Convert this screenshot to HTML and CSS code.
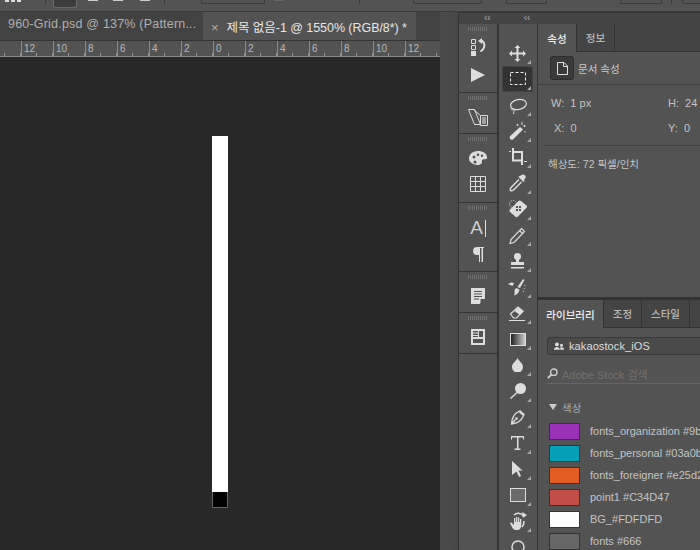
FILE: index.html
```html
<!DOCTYPE html>
<html lang="ko">

<head>
	<meta charset="UTF-8">
	<title>Photoshop</title>
	<link rel="stylesheet" href="styles.css">
</head>

<body>
	<div class="optionsBar">
		<span class="optDots"></span>
		<span class="optDiv optDiv1"></span>
		<span class="optSwatch"></span>
		<span class="optTick optTick1"></span>
		<span class="optTick"></span>
		<span class="optTick optTick3"></span>
		<span class="optDiv optDiv2"></span>
		<span class="optField optField1"></span>
		<span class="optSmall"></span>
		<span class="optDiv optDiv3"></span>
		<span class="optField optField2"></span>
		<span class="optField optField3"></span>
		<span class="optField optField4"></span>
		<span class="optDiv optDiv4"></span>
		<span class="optField optField5"></span>
	</div>

	<div class="workspace">
		<div class="docArea">
			<div class="docTabs">
				<div class="docTab">960-Grid.psd @ 137% (Pattern...</div>
				<div class="docTab docTabActive"><span class="tabClose">×</span>제목 없음-1 @ 1550% (RGB/8*) *</div>
			</div>
			<div class="ruler">
				<span>12</span><span>10</span><span>8</span><span>6</span><span>4</span><span>2</span><span>0</span><span>2</span><span>4</span><span>6</span><span>8</span><span>10</span><span>12</span>
			</div>
			<div class="canvas">
				<div class="pixelWhite"></div>
				<div class="pixelBlack"></div>
			</div>
		</div>

		<div class="spacerCol"></div>

		<div class="docks">
			<div class="collapseStrip">
				<span class="chev chev1">‹‹</span>
				<span class="chev chev2">‹‹</span>
			</div>
			<div class="dockBody">
				<div class="iconDock">
					<div class="dockGroup group1">
						<div class="grip"></div>
						<svg class="dockIcon" width="18" height="18" viewBox="0 0 18 18"><path fill="none" stroke="#ddd" d="M2.500 1.500h4v4h-4zM2.500 7.500h4v4h-4z"/><path fill="#ddd" d="M2 13h5v5H2z"/><path fill="none" stroke="#ddd" stroke-width="2" d="M11 2.500c4 0 5 4 4 7-.6 2-2 3-3.500 4"/><path fill="#ddd" d="M9 3l4-3v6z"/></svg>
						<svg class="dockIcon playIcon" width="16" height="16" viewBox="0 0 16 16"><path fill="#ddd" d="M1 1l14 7-14 7z"/></svg>
					</div>
					<div class="dockGroup group2">
						<div class="grip"></div>
						<svg class="dockIcon" width="22" height="20" viewBox="0 0 22 20"><path fill="none" stroke="#ddd" d="M1.500 2.500h6l6 15h-6zM13.500 8.500h7v10h-7z"/><path fill="none" stroke="#ddd" d="M7 3l6 5"/><path fill="#ddd" d="M15 10h4v7h-4z" opacity=".55"/></svg>
					</div>
					<div class="dockGroup group3">
						<div class="grip"></div>
						<svg class="dockIcon" width="18" height="14" viewBox="0 0 18 14"><path fill="#ddd" fill-rule="evenodd" d="M9 0c5 0 9 2.500 9 6.500 0 1.800-2 2-3.500 1.800-1.500 0-2 1-1.500 2.500.4 1.600-1.500 3.200-4.500 3.200C4 14 0 11 0 7.500 0 3 4 0 9 0zM5 4.500a1.500 1.500 0 100 3 1.500 1.500 0 000-3zM9 2.500a1.300 1.300 0 100 2.600 1.300 1.300 0 000-2.600zM13 3.500a1.200 1.200 0 100 2.400 1.200 1.200 0 000-2.400zM6 9.500a1.500 1.500 0 100 3 1.500 1.500 0 000-3z"/></svg>
						<svg class="dockIcon gridIcon" width="16" height="16" viewBox="0 0 16 16"><path fill="none" stroke="#ddd" d="M.5.500h15v15H.5zM5.500.500v15M10.500.500v15M.5 5.500h15M.5 10.500h15"/></svg>
					</div>
					<div class="dockGroup group4">
						<div class="grip"></div>
						<div class="charIcon">A<span class="caretBar"></span></div>
						<svg class="dockIcon" width="12" height="15" viewBox="0 0 12 15"><path fill="#ddd" d="M5 0h7v1H11v14H9.500V1H8v14H7V8H5a4 4 0 010-8z"/></svg>
					</div>
					<div class="dockGroup group5">
						<div class="grip"></div>
						<svg class="dockIcon" width="14" height="16" viewBox="0 0 14 16"><path fill="#ddd" fill-rule="evenodd" d="M0 0h14v10.500L8.500 16H0zM3 3v1h8V3zM3 5.500v1h8v-1zM3 8v1h8V8zM3 10.500v1h5v-1zM9.500 15l4-4h-4z"/></svg>
					</div>
					<div class="dockGroup group6">
						<div class="grip"></div>
						<svg class="dockIcon" width="14" height="16" viewBox="0 0 14 16"><path fill="#ddd" fill-rule="evenodd" d="M0 0h14v16H0zM2 2v1.500h5V2zM2 4.500V6h5V4.500zM2 7v1h5V7zM8 2v6h4V2zM2 10v4h10v-4z"/></svg>
					</div>
				</div>

				<div class="toolDock">
					<div class="tool"><svg width="17" height="17" viewBox="0 0 17 17"><path fill="#ddd" d="M8.500 0l3 3H9.500v4.500H14V5.500l3 3-3 3V9.500H9.500V14h2l-3 3-3-3h2V9.500H3v2l-3-3 3-3v2h4.500V3h-2z"/></svg></div>
					<div class="tool toolActive"><svg width="16" height="14" viewBox="0 0 16 14"><rect x=".5" y=".5" width="15" height="12" fill="none" stroke="#eee" stroke-dasharray="3 2"/></svg></div>
					<div class="tool"><svg width="18" height="18" viewBox="0 -2 18 18"><ellipse cx="9.500" cy="6.500" rx="8" ry="5" transform="rotate(-12 9.500 6.500)" fill="none" stroke="#ddd" stroke-width="1.200"/><path fill="none" stroke="#ddd" d="M3 9c-2 2 0 3.500 1.500 2.500S5 13 4.500 16"/></svg></div>
					<div class="tool"><svg width="18" height="18" viewBox="0 0 18 18"><path fill="#ddd" d="M11 5l3 2.500L4 17.500c-1 .8-2 0-2.700-.6S.3 15 1.200 14z"/><path fill="#ddd" d="M8 2h1v2H8zM7.500 2.500h2v1h-2zM15 3h1v2h-1zM14.500 3.500h2v1h-2zM15.500 9h1v1.500h-1zM12.500 0h1v3h-1z"/></svg></div>
					<div class="tool"><svg width="18" height="18" viewBox="0 0 18 18"><path fill="none" stroke="#ddd" stroke-width="2" d="M4 0v12.500h10M4 4h9v13"/><path fill="#ddd" d="M0 3h2v1H0zM15 13h3v1h-3z"/></svg></div>
					<div class="tool"><svg width="18" height="18" viewBox="0 0 18 18"><path fill="#ddd" d="M12 1.500c1.500-2 4-1 4.500.5s0 2.500-1.500 3.500l.5 1.500-1 1-5-5 1-1z"/><path fill="none" stroke="#ddd" stroke-width="1.500" d="M10 5.500L2.500 13c-1 1-1.500 2.500-1 3.500 1 .5 2.500 0 3.500-1L12.500 8"/></svg></div>
					<div class="tool"><svg width="20" height="18" viewBox="0 0 20 18"><path fill="#ddd" d="M13 1l5.500 4.500c.8.700.7 1.500 0 2.300L10 16.500c-.8.800-1.800.8-2.500.2L2 12c-.8-.8-.7-1.600 0-2.400L10.500 1c.8-.7 1.700-.7 2.500 0z"/><path fill="#555" d="M8 6h2v2H8zM11 6h2v2h-2zM8 9h2v2H8zM11 9h2v2h-2z"/><circle cx="5" cy="4" r="3.500" fill="none" stroke="#ddd" stroke-dasharray="1 1"/></svg></div>
					<div class="tool"><svg width="17" height="17" viewBox="0 0 17 17"><path fill="none" stroke="#ddd" stroke-width="1.200" d="M12.500 1.500l3 3L5 15.500l-4 1 1-4zM10.500 3.500l3 3"/></svg></div>
					<div class="tool"><svg width="15" height="17" viewBox="0 0 15 17"><circle cx="7.500" cy="3.500" r="3.500" fill="#ddd"/><path fill="#ddd" d="M6 6h3v3h5v3H1V9h5zM1 14h13v1.500H1z"/></svg></div>
					<div class="tool"><svg width="19" height="17" viewBox="0 0 19 17"><path fill="#ddd" d="M15 0l1.500 1L12 9 9.500 8zM8.500 9l3 1.500c-.5 2.500-1.500 5-5.500 6 1-1.500.5-3 .5-4.500 0-1.500.8-2.500 2-3zM0 5c2-1.500 4-2 6-1L4.500 7C3 6 1.500 6 0 5z"/><path fill="none" stroke="#ddd" stroke-dasharray="1 2" d="M17 6l-2 8"/></svg></div>
					<div class="tool"><svg width="17" height="15" viewBox="0 0 17 15"><path fill="none" stroke="#ddd" stroke-width="1.200" d="M1.500 8L9 1l5 4-6.500 7H4.500z"/><path fill="#ddd" d="M9 1.500L14.500 5.500 11 9 5.500 5zM0 14h16v1H0z"/></svg></div>
					<div class="tool"><div class="gradientIcon"></div></div>
					<div class="tool"><svg width="11" height="14" viewBox="0 0 11 14"><path fill="#ddd" d="M5.500 0c1 3 5.500 5 5.500 9A5.500 5.500 0 010 9c0-4 4.500-6 5.500-9z"/></svg></div>
					<div class="tool"><svg width="16" height="16" viewBox="0 0 16 16"><circle cx="10.500" cy="5.500" r="5.500" fill="#ddd"/><path fill="#ddd" d="M6.500 9l1 1L1 16l-1-1z"/></svg></div>
					<div class="tool"><svg width="15" height="15" viewBox="0 0 15 15"><path fill="none" stroke="#ddd" stroke-width="1.300" d="M9 1.500l4.500 4-1 2C11 11 8 13 1.500 14 2 8 4 4.500 7 2.500zM1.500 14l4-4.500"/><circle cx="6.500" cy="8.500" r="1.300" fill="#ddd"/><path fill="#ddd" d="M10 0l5 4.500-1 1L9 1z"/></svg></div>
					<div class="tool"><svg width="13" height="14" viewBox="0 0 13 14"><path fill="#ddd" d="M0 0h13v3.500h-1V1.500H7.500v11H9.500V14h-6v-1.500h2.500v-11H1v2H0z"/></svg></div>
					<div class="tool"><svg width="11" height="16" viewBox="0 0 11 16"><path fill="#ddd" d="M0 0l10.500 9.500H6.500L9 15l-2 1-2.500-5.500L0 14z"/></svg></div>
					<div class="tool"><div class="rectIcon"></div></div>
					<div class="tool"><svg width="18" height="18" viewBox="0 0 18 18"><path fill="#ddd" d="M5 6h1.300v4H7V5h1.300v5H9V5.500h1.300V10H11V7h1.300v6c0 2-1 5-3.500 5H6.500C4 18 3 15 1 11l1-.7L5 13z"/><path fill="none" stroke="#ddd" stroke-width="1.500" d="M5 3c2.500-2.500 7-2.500 9.500 1M15 9c0 3-1 5-2 6"/><path fill="#ddd" d="M13 0l5 3-4 3z"/></svg></div>
					<div class="tool"><svg width="14" height="14" viewBox="0 0 14 14"><circle cx="7" cy="7" r="6" fill="none" stroke="#ddd" stroke-width="1.500"/></svg></div>
				</div>

				<div class="panels">
					<div class="panel propsPanel">
						<div class="tabs">
							<div class="tab tabActive tabProps">속성</div>
							<div class="tab tabInfo">정보</div>
						</div>
						<div class="docRow">
							<div class="docIconBox"><svg width="11" height="13" viewBox="0 0 11 13"><path fill="none" stroke="#e0e0e0" d="M.5.500h6.500l3.500 3.500v8.500H.5zM6.500.500v4h4"/></svg></div>
							<span class="krLabel">문서 속성</span>
						</div>
						<div class="sizeGrid">
							<div class="sizeRow"><span class="cellW">W:&nbsp; 1 px</span><span>H:&nbsp; 24</span></div>
							<div class="sizeRow"><span class="cellW cellX">X:&nbsp; 0</span><span>Y:&nbsp; 0</span></div>
						</div>
						<div class="resText">해상도: 72 픽셀/인치</div>
					</div>
					<div class="panel libPanel">
						<div class="tabs">
							<div class="tab tabActive tabLib">라이브러리</div>
							<div class="tab tabAdj">조정</div>
							<div class="tab tabStyle">스타일</div>
						</div>
						<div class="libSelect">
							<svg width="10" height="9" viewBox="0 0 12 10"><circle cx="3.500" cy="2.500" r="2.300" fill="#ddd"/><path fill="#ddd" d="M0 9c0-2.500 1.500-3.500 3.500-3.500S7 6.500 7 9z"/><circle cx="9" cy="3.500" r="1.800" fill="#ddd"/><path fill="#ddd" d="M7.500 9h4.500c0-2-1-3-3-3-.8 0-1.200.2-1.500.5z"/></svg>
							<span>kakaostock_iOS</span>
						</div>
						<div class="libSearch">
							<svg width="11" height="11" viewBox="0 0 11 11"><circle cx="6.800" cy="4.200" r="3.200" fill="none" stroke="#ccc" stroke-width="1.400"/><path stroke="#ccc" stroke-width="1.800" d="M4.500 6.500L.8 10.200"/></svg>
							<span>Adobe Stock 검색</span>
						</div>
						<div class="colorHead"><span class="triangle"></span>색상</div>
						<div class="colorRow"><span class="chip chipPurple"></span>fonts_organization #9b</div>
						<div class="colorRow"><span class="chip chipTeal"></span>fonts_personal #03a0b</div>
						<div class="colorRow"><span class="chip chipOrange"></span>fonts_foreigner #e25d2</div>
						<div class="colorRow"><span class="chip chipRed"></span>point1 #C34D47</div>
						<div class="colorRow"><span class="chip chipWhite"></span>BG_#FDFDFD</div>
						<div class="colorRow"><span class="chip chipGray"></span>fonts #666</div>
					</div>
				</div>
			</div>
		</div>
	</div>
</body>

</html>
```

FILE: styles.css
```css
* {
	box-sizing: border-box;
}

html,
body {
	margin: 0;
	padding: 0;
	height: 550px;
	overflow: hidden;
}

body {
	width: 700px;
	background-color: #4b4b4b;
	font-family: "Liberation Sans", "Noto Sans CJK KR", sans-serif;
	color: #ccc;
	display: flex;
	flex-direction: column;
}

/* options bar, only its bottom edge is on screen */
.optionsBar {
	height: 12px;
	flex: none;
	background-color: #535353;
	border-bottom: 1px solid #3a3a3a;
	display: flex;
	align-items: flex-start;
	overflow: hidden;
}

.optionsBar span {
	flex: none;
}

.optDots {
	width: 16px;
	height: 2px;
	margin-left: 5px;
	background: repeating-linear-gradient(90deg, #ddd 0 4px, #535353 4px 6px);
}

.optDiv {
	width: 1px;
	height: 5px;
	background-color: #3c3c3c;
}

.optDiv1 {
	margin-left: 24px;
}

.optSwatch {
	width: 24px;
	height: 8px;
	margin-left: 7px;
	background-color: #3c3c3c;
	border: 1px solid #6a6a6a;
	border-top: none;
	border-radius: 0 0 3px 3px;
}

.optTick {
	width: 10px;
	height: 1px;
	margin-left: 15px;
	background-color: #ccc;
}

.optTick1 {
	margin-left: 11px;
}

.optTick3 {
	margin-left: 17px;
}

.optDiv2 {
	margin-left: 14px;
}

.optField {
	height: 4px;
	border: 1px solid #3c3c3c;
	border-top: none;
}

.optField1 {
	width: 64px;
	margin-left: 36px;
}

.optSmall {
	width: 10px;
	height: 1px;
	margin-left: 9px;
	background-color: #666;
}

.optDiv3 {
	margin-left: 75px;
}

.optField2 {
	width: 69px;
	margin-left: 53px;
	border-radius: 0 0 3px 3px;
}

.optField3 {
	width: 41px;
	margin-left: 24px;
}

.optField4 {
	width: 42px;
	margin-left: 73px;
}

.optDiv4 {
	margin-left: 9px;
}

.optField5 {
	width: 30px;
	margin-left: 10px;
	border-radius: 0 0 3px 3px;
}

.workspace {
	flex: 1;
	display: flex;
	min-height: 0;
}

/* document column */
.docArea {
	width: 440px;
	flex: none;
	display: flex;
	flex-direction: column;
}

.docTabs {
	height: 29px;
	flex: none;
	display: flex;
	background-color: #424242;
	border-bottom: 1px solid #333;
}

.docTab {
	width: 203px;
	padding: 5px 0 0 8px;
	font-size: 12.500px;
	letter-spacing: .2px;
	color: #b0b0b0;
	white-space: nowrap;
}

.docTabActive {
	width: 213px;
	background-color: #535353;
	color: #e6e6e6;
	letter-spacing: -.05px;
}

.tabClose {
	color: #b0b0b0;
	margin: 0 8px 0 0;
	font-size: 13px;
}

.ruler {
	height: 16px;
	flex: none;
	display: flex;
	padding-left: 21px;
	background-color: #535353;
	border-bottom: 1px solid #8a8a8a;
	background-image: repeating-linear-gradient(90deg, transparent 0 15px, #999 15px 16px);
	background-size: 16px 3px;
	background-position: 5px 100%;
	background-repeat: repeat-x;
}

.ruler span {
	width: 32px;
	flex: none;
	height: 15px;
	border-left: 1px solid #8a8a8a;
	padding: 2px 0 0 2px;
	font-size: 10px;
	line-height: 12px;
	color: #b8b8b8;
}

.canvas {
	flex: 1;
	background-color: #282828;
	padding: 79px 0 0 212px;
}

.pixelWhite {
	width: 16px;
	height: 356px;
	background-color: #fff;
}

.pixelBlack {
	width: 16px;
	height: 16px;
	background-color: #000;
	border: 1px solid #666;
	border-top: none;
}

.spacerCol {
	width: 18px;
	flex: none;
	background: linear-gradient(90deg, #4b4b4b, #474747);
}

/* docked panels */
.docks {
	flex: 1;
	min-width: 0;
	display: flex;
	flex-direction: column;
	background-color: #333;
	border-left: 1px solid #333;
}

.collapseStrip {
	height: 12px;
	flex: none;
	display: flex;
	background-color: #444;
	border-top: 1px solid #333;
	font-size: 10px;
	line-height: 9px;
	color: #aaa;
}

.chev1 {
	margin-left: 25px;
}

.chev2 {
	margin-left: 33px;
}

.dockBody {
	flex: 1;
	display: flex;
	min-height: 0;
	gap: 1px;
}

.iconDock {
	width: 38px;
	flex: none;
	background-color: #535353;
	display: flex;
	flex-direction: column;
}

.dockGroup {
	display: flex;
	flex-direction: column;
	align-items: center;
	border-bottom: 1px solid #333;
}

.group1 {
	height: 69px;
}

.group2 {
	height: 41px;
}

.group3 {
	height: 69px;
}

.group4 {
	height: 69px;
}

.group5 {
	height: 41px;
}

.group6 {
	height: 41px;
}

.grip {
	width: 20px;
	height: 4px;
	margin: 3px 0 7px;
	flex: none;
	background: repeating-linear-gradient(90deg, #6f6f6f 0 1px, #535353 1px 2px);
}

.group3 .grip {
	margin-bottom: 10px;
}

.group4 .grip {
	margin-bottom: 8px;
}

.group5 .grip,
.group6 .grip {
	margin-bottom: 9px;
}

.dockIcon {
	flex: none;
}

.playIcon {
	margin-top: 11px;
}

.gridIcon {
	margin-top: 11px;
}

.charIcon {
	display: flex;
	align-items: center;
	height: 20px;
	font-size: 19px;
	color: #ccc;
}

.caretBar {
	width: 1px;
	height: 17px;
	margin-left: 2px;
	background-color: #ddd;
}

.group4 .dockIcon {
	margin-top: 9px;
}

.toolDock {
	width: 39px;
	flex: none;
	background-color: #535353;
	padding: 16px 4px 0 3px;
	overflow: hidden;
	border-left: 1px solid #333;
}

.tool {
	position: relative;
	height: 26px;
	display: flex;
	align-items: center;
	justify-content: center;
	border-radius: 3px;
}

.tool::after {
	content: "";
	position: absolute;
	right: 2px;
	bottom: 2px;
	border-left: 4px solid transparent;
	border-bottom: 4px solid #aaa;
}

.toolActive {
	background-color: #333;
	box-shadow: inset 0 0 0 1px #444;
}

.gradientIcon {
	width: 16px;
	height: 13px;
	border: 1px solid #ddd;
	background: linear-gradient(90deg, #222, #ccc);
}

.rectIcon {
	width: 16px;
	height: 14px;
	border: 1px solid #ddd;
	background-color: #6a6a6a;
}

.panels {
	flex: 1;
	min-width: 0;
	display: flex;
	flex-direction: column;
	gap: 3px;
}

.panel {
	background-color: #535353;
}

.propsPanel {
	height: 273px;
	flex: none;
}

.libPanel {
	flex: 1;
	overflow: hidden;
}

.tabs {
	display: flex;
	background-color: #444;
	border-bottom: 1px solid #333;
	font-size: 10.500px;
	font-weight: 500;
}

.propsPanel .tabs {
	height: 28px;
}

.libPanel .tabs {
	height: 28px;
}

.tab {
	display: flex;
	align-items: center;
	justify-content: center;
	color: #b8b8b8;
	border-right: 1px solid #333;
}

.tabActive {
	background-color: #535353;
	color: #eee;
	height: calc(100% + 1px);
}

.tabProps {
	width: 39px;
}

.tabInfo {
	width: 38px;
}

.tabLib {
	width: 66px;
}

.tabAdj {
	width: 38px;
}

.tabStyle {
	width: 48px;
}

.docRow {
	height: 33px;
	padding-left: 12px;
	display: flex;
	align-items: center;
	border-bottom: 1px solid #3f3f3f;
}

.docIconBox {
	width: 24px;
	height: 24px;
	flex: none;
	display: flex;
	align-items: center;
	justify-content: center;
	background-color: #3a3a3a;
	border: 1px solid #2e2e2e;
	border-radius: 3px;
	margin-right: 4px;
}

.krLabel {
	font-size: 10.500px;
	color: #ccc;
}

.sizeGrid {
	margin: 0 0 0 5px;
	padding-top: 5px;
	height: 61px;
	border-bottom: 1px solid #404040;
}

.sizeRow {
	display: flex;
	height: 25px;
	align-items: center;
	font-size: 11px;
	color: #c4c4c4;
	white-space: nowrap;
}

.cellW {
	width: 125px;
	padding-left: 8px;
}

.cellX {
	padding-left: 11px;
}

.resText {
	margin: 10px 0 0 10px;
	font-size: 10.500px;
	color: #c4c4c4;
}

.libSelect {
	height: 18px;
	margin: 9px 0 0 9px;
	padding-left: 6px;
	display: flex;
	align-items: center;
	gap: 5px;
	border: 1px solid #3a3a3a;
	border-right: none;
	border-radius: 4px 0 0 4px;
	background-color: #4a4a4a;
	font-size: 11px;
	letter-spacing: .1px;
	color: #ddd;
}

.libSearch {
	height: 24px;
	margin: 5px 0 0 9px;
	padding-top: 4px;
	display: flex;
	align-items: center;
	gap: 4px;
	border-bottom: 1px solid #666;
	font-size: 11px;
	color: #707070;
}

.colorHead {
	height: 24px;
	margin: 11px 0 4px 11px;
	display: flex;
	align-items: center;
	font-size: 10.500px;
	color: #aaa;
}

.triangle {
	width: 0;
	height: 0;
	margin-right: 5px;
	border-left: 4px solid transparent;
	border-right: 4px solid transparent;
	border-top: 6px solid #ccc;
}

.colorRow {
	height: 22px;
	display: flex;
	align-items: flex-start;
	padding-left: 11px;
	font-size: 11px;
	line-height: 17px;
	color: #c4c4c4;
	white-space: nowrap;
}

.chip {
	width: 31px;
	height: 17px;
	flex: none;
	margin-right: 10px;
	border: 1px solid #333;
}

.chipPurple {
	background-color: #9b30ba;
}

.chipTeal {
	background-color: #03a0b8;
}

.chipOrange {
	background-color: #e25d22;
}

.chipRed {
	background-color: #c34d47;
}

.chipWhite {
	background-color: #fdfdfd;
}

.chipGray {
	background-color: #666;
}
```
